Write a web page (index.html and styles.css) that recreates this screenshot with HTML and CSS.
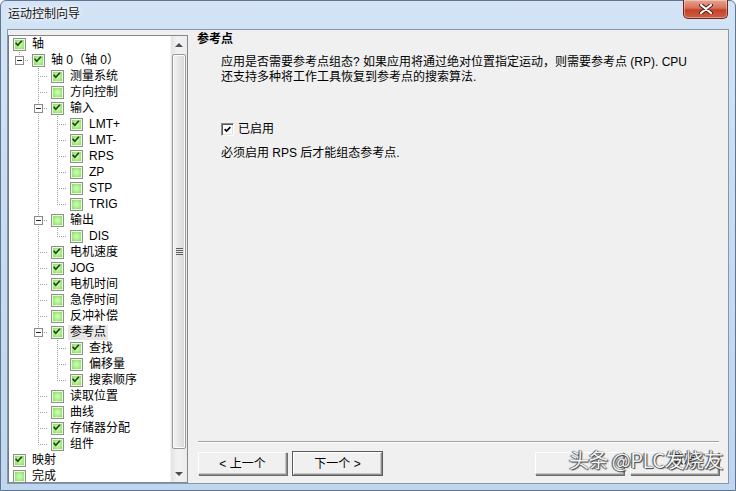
FILE: index.html
```html
<!DOCTYPE html>
<html lang="zh">
<head>
<meta charset="utf-8">
<title>运动控制向导</title>
<link rel="stylesheet" href="styles.css">
</head>
<body>
<div class="window">
  <div class="titlebar">
    <span class="title">运动控制向导</span>
    <span class="close"><svg viewBox="0 0 14 10" width="14" height="10"><path d="M2 1 L12 9 M12 1 L2 9" class="xo"/><path d="M2 1 L12 9 M12 1 L2 9" class="xi"/></svg></span>
  </div>
  <div class="client">
    <div class="tree">
      <div class="rows">
        <div class="row"><span class="cb on"><svg viewBox="0 0 13 13"><path d="M3.5 6.2 L5.5 8.4 L9.6 3.8"/></svg></span><span class="lb">轴</span></div>
        <div class="row"><i class="g l"><b class="ex"></b></i><span class="cb on"><svg viewBox="0 0 13 13"><path d="M3.5 6.2 L5.5 8.4 L9.6 3.8"/></svg></span><span class="lb">轴 0（轴 0）</span></div>
        <div class="row"><i class="g"></i><i class="g t"></i><span class="cb on"><svg viewBox="0 0 13 13"><path d="M3.5 6.2 L5.5 8.4 L9.6 3.8"/></svg></span><span class="lb">测量系统</span></div>
        <div class="row"><i class="g"></i><i class="g t"></i><span class="cb"></span><span class="lb">方向控制</span></div>
        <div class="row"><i class="g"></i><i class="g t"><b class="ex"></b></i><span class="cb on"><svg viewBox="0 0 13 13"><path d="M3.5 6.2 L5.5 8.4 L9.6 3.8"/></svg></span><span class="lb">输入</span></div>
        <div class="row"><i class="g"></i><i class="g v"></i><i class="g t"></i><span class="cb on"><svg viewBox="0 0 13 13"><path d="M3.5 6.2 L5.5 8.4 L9.6 3.8"/></svg></span><span class="lb">LMT+</span></div>
        <div class="row"><i class="g"></i><i class="g v"></i><i class="g t"></i><span class="cb on"><svg viewBox="0 0 13 13"><path d="M3.5 6.2 L5.5 8.4 L9.6 3.8"/></svg></span><span class="lb">LMT-</span></div>
        <div class="row"><i class="g"></i><i class="g v"></i><i class="g t"></i><span class="cb on"><svg viewBox="0 0 13 13"><path d="M3.5 6.2 L5.5 8.4 L9.6 3.8"/></svg></span><span class="lb">RPS</span></div>
        <div class="row"><i class="g"></i><i class="g v"></i><i class="g t"></i><span class="cb"></span><span class="lb">ZP</span></div>
        <div class="row"><i class="g"></i><i class="g v"></i><i class="g t"></i><span class="cb"></span><span class="lb">STP</span></div>
        <div class="row"><i class="g"></i><i class="g v"></i><i class="g l"></i><span class="cb"></span><span class="lb">TRIG</span></div>
        <div class="row"><i class="g"></i><i class="g t"><b class="ex"></b></i><span class="cb"></span><span class="lb">输出</span></div>
        <div class="row"><i class="g"></i><i class="g v"></i><i class="g l"></i><span class="cb"></span><span class="lb">DIS</span></div>
        <div class="row"><i class="g"></i><i class="g t"></i><span class="cb on"><svg viewBox="0 0 13 13"><path d="M3.5 6.2 L5.5 8.4 L9.6 3.8"/></svg></span><span class="lb">电机速度</span></div>
        <div class="row"><i class="g"></i><i class="g t"></i><span class="cb on"><svg viewBox="0 0 13 13"><path d="M3.5 6.2 L5.5 8.4 L9.6 3.8"/></svg></span><span class="lb">JOG</span></div>
        <div class="row"><i class="g"></i><i class="g t"></i><span class="cb on"><svg viewBox="0 0 13 13"><path d="M3.5 6.2 L5.5 8.4 L9.6 3.8"/></svg></span><span class="lb">电机时间</span></div>
        <div class="row"><i class="g"></i><i class="g t"></i><span class="cb"></span><span class="lb">急停时间</span></div>
        <div class="row"><i class="g"></i><i class="g t"></i><span class="cb"></span><span class="lb">反冲补偿</span></div>
        <div class="row"><i class="g"></i><i class="g t"><b class="ex"></b></i><span class="cb on"><svg viewBox="0 0 13 13"><path d="M3.5 6.2 L5.5 8.4 L9.6 3.8"/></svg></span><span class="lb sel">参考点</span></div>
        <div class="row"><i class="g"></i><i class="g v"></i><i class="g t"></i><span class="cb on"><svg viewBox="0 0 13 13"><path d="M3.5 6.2 L5.5 8.4 L9.6 3.8"/></svg></span><span class="lb">查找</span></div>
        <div class="row"><i class="g"></i><i class="g v"></i><i class="g t"></i><span class="cb"></span><span class="lb">偏移量</span></div>
        <div class="row"><i class="g"></i><i class="g v"></i><i class="g l"></i><span class="cb on"><svg viewBox="0 0 13 13"><path d="M3.5 6.2 L5.5 8.4 L9.6 3.8"/></svg></span><span class="lb">搜索顺序</span></div>
        <div class="row"><i class="g"></i><i class="g t"></i><span class="cb"></span><span class="lb">读取位置</span></div>
        <div class="row"><i class="g"></i><i class="g t"></i><span class="cb"></span><span class="lb">曲线</span></div>
        <div class="row"><i class="g"></i><i class="g t"></i><span class="cb on"><svg viewBox="0 0 13 13"><path d="M3.5 6.2 L5.5 8.4 L9.6 3.8"/></svg></span><span class="lb">存储器分配</span></div>
        <div class="row"><i class="g"></i><i class="g l"></i><span class="cb on"><svg viewBox="0 0 13 13"><path d="M3.5 6.2 L5.5 8.4 L9.6 3.8"/></svg></span><span class="lb">组件</span></div>
        <div class="row"><span class="cb on"><svg viewBox="0 0 13 13"><path d="M3.5 6.2 L5.5 8.4 L9.6 3.8"/></svg></span><span class="lb">映射</span></div>
        <div class="row"><span class="cb"></span><span class="lb">完成</span></div>
      </div>
      <div class="scrollbar">
        <div class="sb-btn"><span class="arr up"></span></div>
        <div class="sb-track">
          <div class="thumb"><span class="grip"></span></div>
        </div>
        <div class="sb-btn"><span class="arr down"></span></div>
      </div>
    </div>
    <div class="main">
      <div class="heading">参考点</div>
      <p class="desc">应用是否需要参考点组态? 如果应用将通过绝对位置指定运动，则需要参考点 (RP). CPU<br>还支持多种将工作工具恢复到参考点的搜索算法.</p>
      <label class="check-row"><span class="chk"><svg viewBox="0 0 11 11"><path d="M2 5 L4.3 7.5 L9 2.6"/></svg></span><span>已启用</span></label>
      <p class="note">必须启用 RPS 后才能组态参考点.</p>
      <div class="sep"></div>
      <div class="buttons">
        <button class="btn">&lt; 上一个</button>
        <button class="btn default">下一个 &gt;</button>
        <span class="spacer"></span>
        <button class="btn"></button>
        <button class="btn cancel">取消</button>
      </div>
      <div class="watermark">头条 @PLC发烧友</div>
    </div>
  </div>
</div>
</body>
</html>
```
FILE: styles.css
```css
* { box-sizing: border-box; }
html, body { margin: 0; padding: 0; }
body {
  width: 736px;
  height: 491px;
  overflow: hidden;
  font-family: "Liberation Sans", "Noto Sans CJK SC", sans-serif;
  font-size: 12px;
  color: #000;
  background: #fff;
}
.window {
  width: 736px;
  height: 491px;
  display: flex;
  flex-direction: column;
  border: 1px solid #5f7590;
  border-radius: 6px 6px 0 0;
  background: linear-gradient(180deg, #d4e4f6 0%, #c8dcf2 40%, #c0d6ef 100%);
  padding: 0 6px 6px 6px;
}
.titlebar {
  height: 28px;
  flex: none;
  display: flex;
  align-items: flex-start;
}
.title {
  padding-top: 5px;
  padding-left: 1px;
  line-height: 16px;
  color: #111;
  text-shadow: 0 0 6px #fff, 0 0 3px #fff;
}
.close {
  margin-left: auto;
  margin-right: 1px;
  margin-top: -1px;
  width: 45px;
  height: 19px;
  display: flex;
  align-items: center;
  justify-content: center;
  border: 1px solid #6b2a20;
  border-top: none;
  border-radius: 0 0 5px 5px;
  background: linear-gradient(180deg, #e8a493 0%, #d9705a 45%, #c4422a 55%, #cf5f45 100%);
  box-shadow: inset 0 0 0 1px rgba(255,255,255,0.35);
}
.close .xo { stroke: #4a2018; stroke-width: 4; stroke-linecap: round; fill: none; }
.close .xi { stroke: #fff; stroke-width: 2.2; stroke-linecap: round; fill: none; }

.client {
  flex: 1;
  display: flex;
  border: 1px solid #8797ab;
  background: #f0f0f0;
  min-height: 0;
}

/* Tree */
.tree {
  width: 180px;
  flex: none;
  margin-top: 5px;
  display: flex;
  background: #fff;
  border: 1px solid #828790;
  border-left-color: #6f7a88;
  overflow: hidden;
}
.rows {
  flex: 1;
  padding-left: 1px;
  overflow: hidden;
}
.row {
  height: 16px;
  display: flex;
  align-items: center;
  white-space: nowrap;
}
.g {
  width: 19px;
  height: 16px;
  flex: none;
  display: flex;
  justify-content: center;
  align-items: flex-start;
  background-repeat: no-repeat;
}
.g.v {
  background-image: repeating-linear-gradient(to bottom, #a0a0a0 0 1px, transparent 1px 2px);
  background-size: 1px 16px;
  background-position: 9px 0;
}
.g.t {
  background-image:
    repeating-linear-gradient(to bottom, #a0a0a0 0 1px, transparent 1px 2px),
    repeating-linear-gradient(to right, #a0a0a0 0 1px, transparent 1px 2px);
  background-size: 1px 16px, 10px 1px;
  background-position: 9px 0, 11px 8px;
}
.g.l {
  background-image:
    repeating-linear-gradient(to bottom, #a0a0a0 0 1px, transparent 1px 2px),
    repeating-linear-gradient(to right, #a0a0a0 0 1px, transparent 1px 2px);
  background-size: 1px 9px, 10px 1px;
  background-position: 9px 0, 11px 8px;
}
.ex {
  width: 9px;
  height: 9px;
  margin-top: 4px;
  border: 1px solid #8a8a8a;
  background: linear-gradient(#222, #222) center / 5px 1px no-repeat, #fff;
}
.cb {
  width: 13px;
  height: 13px;
  flex: none;
  margin-left: 3px;
  border: 1px solid #8e8f8f;
  background: radial-gradient(circle at 50% 50%, #d6f9c0 0%, #a9ef86 45%, #5fd73a 100%);
  box-shadow: inset 0 0 0 1px #eafbe0;
  display: flex;
}
.cb svg { width: 11px; height: 11px; margin: 0; }
.cb svg path { fill: none; stroke: #1f3f14; stroke-width: 1.9; stroke-linecap: square; transform: translate(-1px, -1px); }
.lb {
  margin-left: 4px;
  padding: 0 2px;
  line-height: 15px;
  height: 15px;
}
.lb.sel { background: #e6e6e6; }

.scrollbar {
  width: 17px;
  flex: none;
  display: flex;
  flex-direction: column;
  background: linear-gradient(90deg, #e3e3e3, #f2f2f2 40%, #ececec);
  border-left: 1px solid #f4f4f4;
}
.sb-btn {
  height: 17px;
  flex: none;
  display: flex;
  align-items: center;
  justify-content: center;
}
.arr { width: 0; height: 0; border-left: 4px solid transparent; border-right: 4px solid transparent; }
.arr.up { border-bottom: 4px solid #4d4d4d; }
.arr.down { border-top: 4px solid #4d4d4d; }
.sb-track {
  flex: 1;
  padding: 1px 1px 0 1px;
  display: flex;
  flex-direction: column;
}
.thumb {
  height: 395px;
  border: 1px solid #9a9a9a;
  border-radius: 2px;
  background: linear-gradient(90deg, #f4f4f4 0%, #e6e6e6 50%, #d6d6d6 100%);
  box-shadow: inset 0 0 0 1px #fbfbfb;
  display: flex;
  align-items: center;
  justify-content: center;
}
.grip {
  width: 7px;
  height: 7px;
  background: repeating-linear-gradient(to bottom, #5c5c5c 0 1px, #e8e8e8 1px 2px);
}

/* Main */
.main {
  flex: 1;
  display: flex;
  flex-direction: column;
  padding: 2px 9px 8px 10px;
  position: relative;
  line-height: 15px;
}
.heading {
  font-weight: bold;
  margin-left: -1px;
  line-height: 15px;
}
.desc {
  margin: 8px 0 0 23px;
  line-height: 15px;
}
.check-row {
  margin: 37px 0 0 23px;
  display: flex;
  align-items: center;
  gap: 4px;
  line-height: 15px;
}
.chk {
  width: 13px;
  height: 13px;
  border: 1px solid;
  border-color: #8a8a8a #fff #fff #8a8a8a;
  box-shadow: inset 1px 1px 0 #5a5a5a, inset -1px -1px 0 #e0e0e0;
  background: #fff;
  display: flex;
  align-items: center;
  justify-content: center;
}
.chk svg { width: 9px; height: 9px; }
.chk svg path { fill: none; stroke: #000; stroke-width: 2; }
.note {
  margin: 9px 0 0 23px;
  line-height: 15px;
}
.sep {
  margin-top: auto;
  height: 2px;
  border-top: 1px solid #a0a0a0;
  border-bottom: 1px solid #fff;
}
.buttons {
  margin-top: 9px;
  display: flex;
  gap: 6px;
}
.spacer { flex: 1; }
.btn {
  width: 89px;
  height: 23px;
  font: inherit;
  font-size: 12px;
  color: #000;
  background: #f0f0f0;
  border: 1px solid;
  border-color: #fff #8c8c8c #8c8c8c #fff;
  box-shadow: inset -1px -1px 0 #c8c8c8, 1px 1px 0 #6e6e6e;
  padding: 0;
  line-height: 20px;
}
.btn.cancel {
  line-height: 12px;
  padding-left: 18px;
  vertical-align: top;
  align-self: flex-start;
  display: flex;
  align-items: flex-start;
  justify-content: center;
  padding-top: 1px;
}
.btn.default {
  outline: 1px solid #5a5a5a;
  outline-offset: 0;
}
.watermark {
  position: absolute;
  right: 5px;
  bottom: 11px;
  font-family: "Noto Sans CJK SC", sans-serif;
  font-size: 20px;
  line-height: 24px;
  color: #f4f4f4;
  text-shadow: 0 0 1px #222, 1px 1px 1px #444, -1px 0 1px #555;
  letter-spacing: -0.5px;
}
```
